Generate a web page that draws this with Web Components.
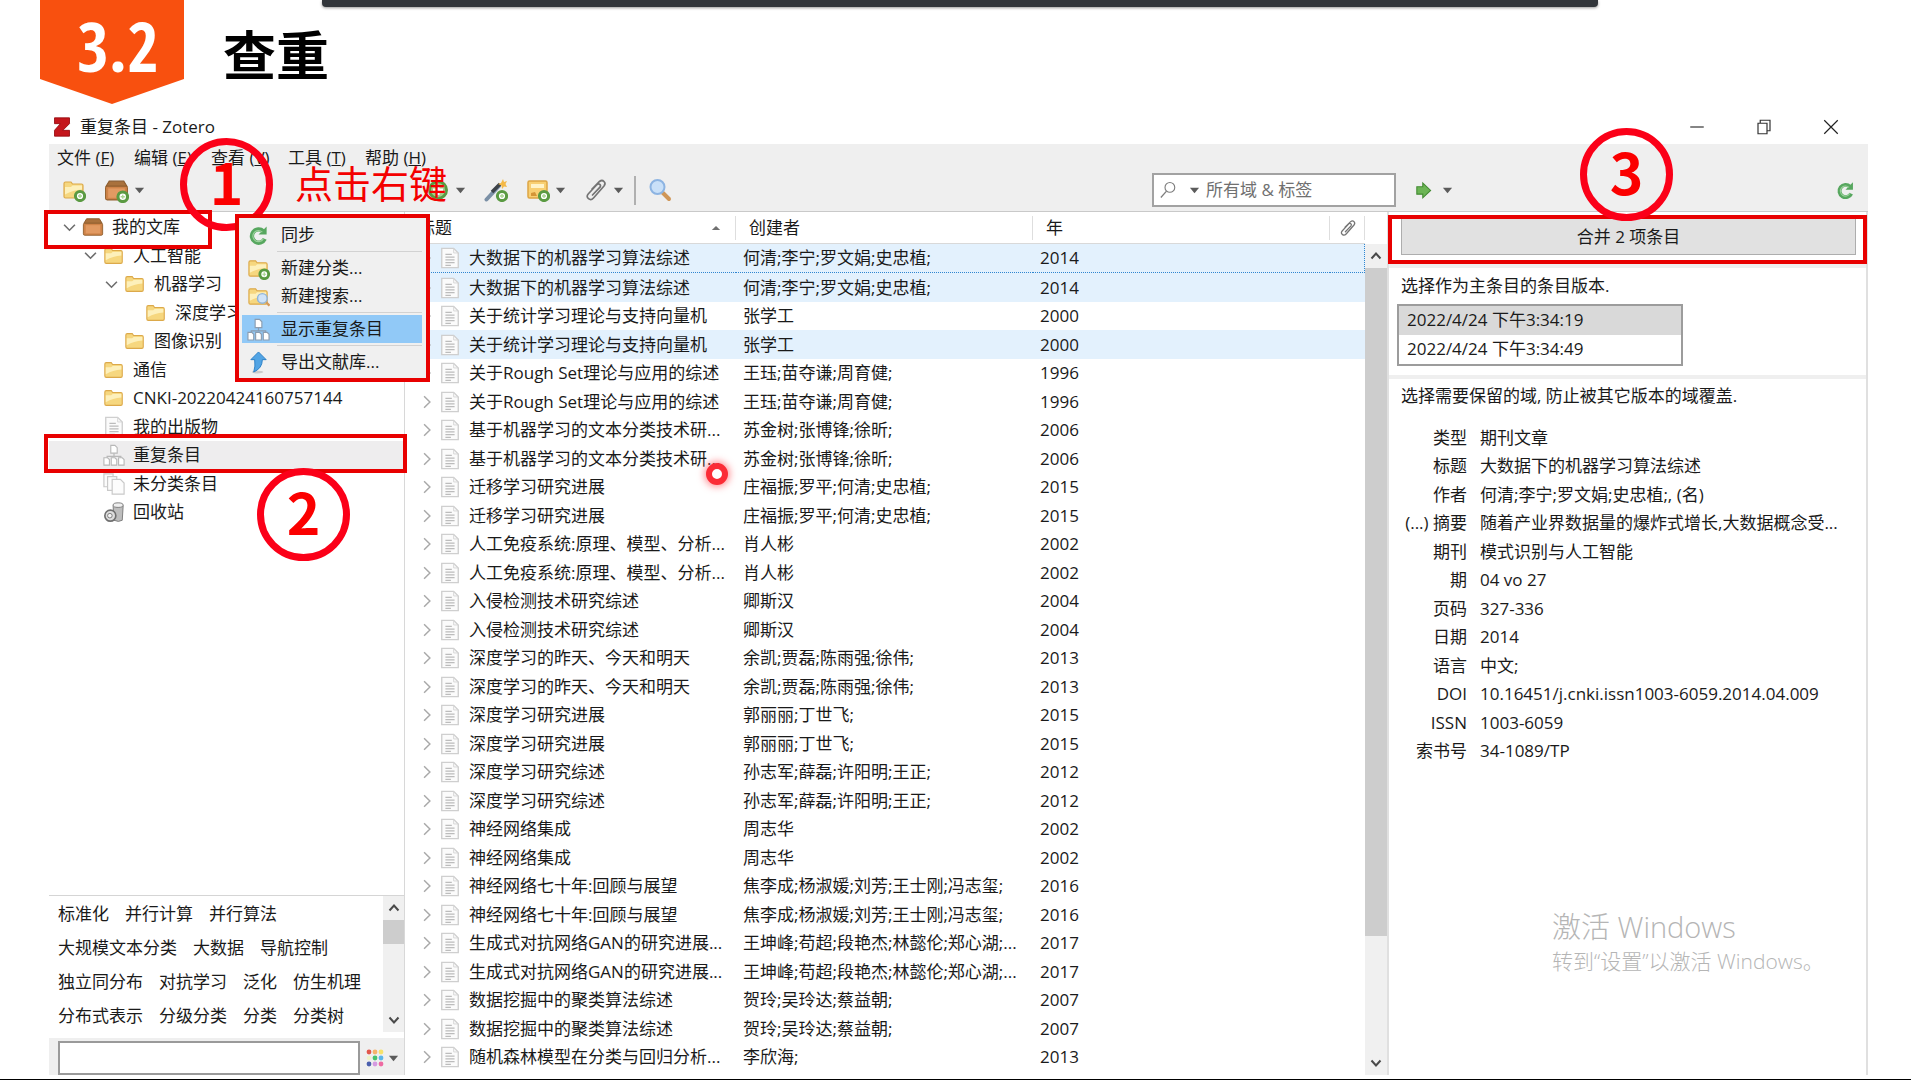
<!DOCTYPE html>
<html lang="zh-CN">
<head>
<meta charset="utf-8">
<title>查重 - Zotero</title>
<style>
html,body{margin:0;height:100%}
body{background:#fff;color:#1a1a1a;font:17px/28px "Open Sans","Noto Sans CJK SC",sans-serif;overflow:hidden}
</style>
</head>
<body>
<slide-page></slide-page>
<script>
const folder = '<path d="M2 5.500q0-1.500 1.500-1.500h5.500l1.500 2h9q1.500 0 1.500 1.500v11q0 1.500-1.500 1.500h-16q-1.500 0-1.500-1.500z" fill="#f6d77f" stroke="#dca94a" stroke-width="1.200"/><path d="M3 9h6l1.500-1.500h9.500v4q-9 .500-17 5z" fill="#fdf0bb"/>';
const plus = '<circle cx="18" cy="18" r="4.600" fill="#fff" stroke="#5a9a42" stroke-width="3"/><path d="M18 16v4M16 18h4" stroke="#a9d492" stroke-width="1.300"/>';
const box = '<path d="M5 3h14l3 5H2z" fill="#a9713c" stroke="#8a5a2c"/><rect x="1.500" y="8" width="21" height="13" rx="1.500" fill="#cf8348" stroke="#93602f"/><rect x="4" y="10" width="16" height="9" fill="#e29a62"/>';
const sheet = '<path d="M3 1.500h13l5 5v16H3z" fill="#fbfbfb" stroke="#cfcfcf" stroke-width="1.500"/><path d="M16 1.500v5h5" fill="none" stroke="#d4d4d4"/><path d="M7 8h7M7 11h10M7 14h10M7 17h10M7 20h6" stroke="#bcbcbc" stroke-width="1.400"/>';
const clip = '<path d="M8 11L15.500 3.500q2.500-2 4.500 0t0 4.500L9.500 20q-2.500 2.800-5 .700t-.300-4.700L13 6.500q1.500-1.300 2.800-.200t.200 2.900L8.500 17" fill="none" stroke="#747474" stroke-width="1.700" stroke-linecap="round"/>';
const sync = '<path d="M18.500 15.500a7 7 0 1 1-1.500-8" fill="none" stroke="#57a75f" stroke-width="4.500"/><path d="M20.500 2.500v8.500h-8.500z" fill="#57a75f"/><path d="M17 15.500a5.800 5.800 0 1 1-1-7" fill="none" stroke="#9bd29b" stroke-width="1.200"/>';
const dup = c => `<path d="M12 9v5M4.500 16v-2.500h15V16" stroke="${c}" fill="none" stroke-width="1.300"/><g fill="#fff" stroke="${c}" stroke-width="1.200"><path d="M8.500 1.500h4.500l2.500 2.500v6h-7zM1 15h4l2 2v6H1zM9 15h4l2 2v6H9zM17 15h4l2 2v6h-6z"/></g>`;
const ICONS = {
  folder, box, sheet, clip, sync,
  folderAdd: folder + plus,
  boxAdd: box + plus,
  folderFind: folder + '<circle cx="16" cy="14" r="5" fill="#cfe3f8" stroke="#8fb4da" stroke-width="1.500"/><path d="M20 18l3.500 3.500" stroke="#d49a5a" stroke-width="2.500"/>',
  add: '<circle cx="12" cy="12" r="8.500" fill="#a3cf8c" stroke="#5a9a42" stroke-width="3"/><path d="M12 7v10M7 12h10" stroke="#fff" stroke-width="3"/>',
  wand: '<path d="M2.500 21.500L15 8" stroke="#7b90a6" stroke-width="4" stroke-linecap="round"/><path d="M8 14l8-8" stroke="#3d4248" stroke-width="3.500"/><path d="M19 1l1 3 3-1-1.500 3L23 9l-3-.500L18 11l-.500-3.500L14 6l3-1z" fill="#f4b948"/>' + plus,
  note: '<rect x="2" y="3" width="19" height="17" rx="1.500" fill="#f8cf72" stroke="#dda544" stroke-width="1.500"/><rect x="5" y="6" width="13" height="4" fill="#fff3c8"/><path d="M5 15l4-1 2 4H5z" fill="#d49537"/>' + plus,
  find: '<path d="M15 15l6 6" stroke="#cf9657" stroke-width="4" stroke-linecap="round"/><circle cx="9.500" cy="9" r="7" fill="#c9e0f8" stroke="#8db4e2" stroke-width="2"/>',
  lens: '<circle cx="14.500" cy="8.500" r="6.500" fill="none" stroke="#7d7d7d" stroke-width="1.500"/><path d="M10 13.500L2.500 22" stroke="#7d7d7d" stroke-width="1.700"/>',
  go: '<path d="M2 8.500h6.500V4.500l8.500 8-8.500 8v-4H2z" fill="#6cb555" stroke="#448c34" stroke-width="1.200"/>',
  dup: dup('#b8b8b8'), dupBlue: dup('#8c9db0'),
  unfiled: '<g fill="#fcfcfc" stroke="#c9c9c9" stroke-width="1.300"><path d="M1 1h10v14H1z"/><path d="M5 4h10v15H5z"/><path d="M10 7h9l4 4v12H10z"/></g>',
  trash: '<path d="M11 5l1 16q5 2.500 9 0l1-16z" fill="#bdbdbd" stroke="#777"/><ellipse cx="16.500" cy="4.500" rx="5.500" ry="2.500" fill="#efefef" stroke="#777"/><circle cx="8" cy="16" r="6" fill="#ddd" stroke="#707070" stroke-width="1.800"/><circle cx="7.500" cy="16" r="2.500" fill="#f6f6f6" stroke="#777"/>',
  export: '<ellipse cx="11" cy="22" rx="6" ry="1.500" fill="#ccc"/><path d="M12 1l8 8h-4q0 9-9 13 2-6 1-13H4z" fill="#52a4e4" stroke="#2b7fc6"/>',
  zotero: '<path d="M3 1h18v7l-8 8h8v7H3v-7l7-8H3z" fill="#c4161c" stroke="#94080d"/>',
  min: '<path d="M3 12h18" stroke="#333" stroke-width="1.600"/>',
  max: '<path d="M4 7h12v14H4zM7 7V3h13v14h-4" fill="none" stroke="#333" stroke-width="1.600"/>',
  close: '<path d="M3 3l18 18M21 3L3 21" stroke="#222" stroke-width="1.600"/>',
  caret: '<path d="M2 6h20L12 18z" fill="#5b5b5b"/>',
  sort: '<path d="M2 17h20L12 7z" fill="#707070"/>',
  right: '<path d="M7 2l10 10L7 22" fill="none" stroke="#a9a9a9" stroke-width="2.500"/>',
  down: '<path d="M2 7l10 10L22 7" fill="none" stroke="#6e6e6e" stroke-width="3"/>',
  sUp: '<path d="M3 17l9-10 9 10" fill="none" stroke="#4a4a4a" stroke-width="4"/>',
  sDown: '<path d="M3 7l9 10 9-10" fill="none" stroke="#4a4a4a" stroke-width="4"/>',
  colors: '<g><circle cx="4" cy="4" r="3.200" fill="#e2574c"/><circle cx="12" cy="4" r="3.200" fill="#f6b36b"/><circle cx="20" cy="4" r="3.200" fill="#f7e26b"/><circle cx="4" cy="12" r="3" fill="#eef3c8"/><circle cx="12" cy="12" r="3.200" fill="#49c36c"/><circle cx="20" cy="12" r="3.200" fill="#5bb6e8"/><circle cx="4" cy="20" r="3.200" fill="#4a5fae"/><circle cx="12" cy="20" r="3.200" fill="#d59ae0"/><circle cx="20" cy="20" r="3.200" fill="#ee6aa2"/></g>'
};
const RESET = ':host,*{box-sizing:border-box}button{all:unset;box-sizing:border-box;cursor:default}';
function define(name, render) {
  customElements.define(name, class extends HTMLElement {
    constructor() { super(); this.attachShadow({mode: 'open'}); }
    connectedCallback() { this.shadowRoot.innerHTML = render(this); }
  });
}
const I = (name, size = 24) => `<z-icon name="${name}" size="${size}"></z-icon>`;

define('z-icon', el => { const s = el.getAttribute('size'); return `<style>:host{display:block;flex:none;width:${s}px;height:${s}px}svg{display:block}</style><svg width="${s}" height="${s}" viewBox="0 0 24 24" aria-hidden="true">${ICONS[el.getAttribute('name')]}</svg>`; });

define('tool-button', el => `<style>${RESET}:host{display:block;flex:none}button{display:flex;align-items:center;gap:5px}</style>
<button aria-label="${el.getAttribute('label')}">${I(el.getAttribute('icon'), el.getAttribute('size') || 24)}${el.hasAttribute('menu') ? I('caret', 11) : ''}</button>`);

define('scroll-bar', () => `<style>:host{display:flex;flex-direction:column;flex:none;background:#f0f0f0}
i{display:flex;height:24px;align-items:center;justify-content:center;flex:none}b{background:#cdcdcd;flex:var(--thumb)}u{flex:var(--rest)}</style>
<i>${I('sUp', 12)}</i><b></b><u></u><i>${I('sDown', 12)}</i>`);

define('title-bar', () => `<style>${RESET}:host{display:flex;height:44px;flex:none;align-items:center;padding:10px 28px 0 3px;gap:8px}
span{flex:1}button{width:18px;margin-left:41px}</style>${I('zotero', 20)}<span>重复条目 - Zotero</span>
<button aria-label="最小化">${I('min', 18)}</button><button aria-label="还原">${I('max', 18)}</button><button aria-label="关闭">${I('close', 18)}</button>`);

define('menu-bar', () => `<style>${RESET}:host{display:flex;flex:none;height:27px;padding-left:8px;background:#efefef}button{width:77px;white-space:nowrap;line-height:26px}</style>` +
  [['文件','F'],['编辑','E'],['查看','V'],['工具','T'],['帮助','H']].map(m => `<button>${m[0]} (<u>${m[1]}</u>)</button>`).join(''));

define('tool-bar', () => `<style>${RESET}:host{display:flex;flex:none;height:41px;background:#efefef;border-bottom:1px solid #c9c9c9;align-items:center;padding-bottom:2px}
div{display:flex;align-items:center}.c{width:377px;padding-left:13px;gap:18px;flex:none}.i{flex:1;gap:18px}.r{width:472px;flex:none;padding:0 12px 0 19px;justify-content:space-between}
hr{border:0;width:2px;height:29px;background:#b0b0b0;margin:0 -6px 0 -8px}label{display:flex;align-items:center;gap:12px;width:244px;height:34px;border:2px solid #a2a2a2;background:#fff;padding-left:5px;margin-left:auto}
label z-icon+z-icon{margin-right:-6px}input{border:0;outline:0;flex:1;min-width:0;padding:0;background:none;font:inherit}input::placeholder{color:#707070;opacity:1}</style>
<div class="c"><tool-button icon="folderAdd" label="新建分类"></tool-button><tool-button icon="boxAdd" label="新建文库" size="25" menu></tool-button></div>
<div class="i"><tool-button icon="add" label="新建条目" menu></tool-button><tool-button icon="wand" label="通过标识符添加"></tool-button><tool-button icon="note" label="新建笔记" menu></tool-button><tool-button icon="clip" label="添加附件" menu></tool-button><hr><tool-button icon="find" label="高级搜索"></tool-button>
<label>${I('lens', 18)}${I('caret', 11)}<input placeholder="所有域 &amp; 标签" aria-label="搜索"></label></div>
<div class="r"><tool-button icon="go" label="定位" menu size="22"></tool-button><tool-button icon="sync" label="同步" size="21"></tool-button></div>`);

define('tree-row', el => { const l = +el.getAttribute('level'); return `<style>${RESET}:host{display:flex;height:28px;align-items:center;padding-left:${14 + 21 * l}px;white-space:nowrap}:host(:nth-child(even)){height:29px}:host([selected]){background:#eeedee}
i{width:19px;flex:none}span{margin-left:8px}</style><i>${el.hasAttribute('open') ? I('down', 13) : ''}</i>${I(el.getAttribute('icon'), 22)}<span><slot></slot></span>`; });

define('collection-pane', () => `<style>${RESET}:host{display:flex;flex-direction:column;width:356px;flex:none;border-right:1px solid #d8d8d8;min-height:0}
nav{flex:1;padding-top:1px;min-height:0;overflow:hidden}.t{display:flex;height:137px;border-top:1px solid #d5d5d5;flex:none}.g{flex:1;display:flex;flex-wrap:wrap;column-gap:16px;align-content:flex-start;padding-left:9px;overflow:hidden}
.g button{height:34px;line-height:36px}scroll-bar{width:21px;--thumb:24;--rest:64}.f{display:flex;flex:none;margin-top:6px;height:37px;background:#efefef;padding:3px 5px 0 9px;align-items:center;gap:6px}
input{flex:1;min-width:0;height:34px;border:2px solid #9a9a9a;font:inherit}.f button{display:flex;align-items:center;gap:4px}</style>
<nav><tree-row level="0" icon="box" open>我的文库</tree-row><tree-row level="1" icon="folder" open>人工智能</tree-row><tree-row level="2" icon="folder" open>机器学习</tree-row><tree-row level="3" icon="folder">深度学习</tree-row><tree-row level="2" icon="folder">图像识别</tree-row><tree-row level="1" icon="folder">通信</tree-row><tree-row level="1" icon="folder">CNKI-20220424160757144</tree-row><tree-row level="1" icon="sheet">我的出版物</tree-row><tree-row level="1" icon="dup" selected>重复条目</tree-row><tree-row level="1" icon="unfiled">未分类条目</tree-row><tree-row level="1" icon="trash">回收站</tree-row></nav>
<div class="t"><div class="g">${'标准化 并行计算 并行算法 大规模文本分类 大数据 导航控制 独立同分布 对抗学习 泛化 仿生机理 分布式表示 分级分类 分类 分类树'.split(' ').map(t => `<button>${t}</button>`).join('')}</div><scroll-bar></scroll-bar></div>
<div class="f"><input aria-label="筛选标签"><button aria-label="标签颜色">${I('colors', 18)}${I('caret', 11)}</button></div>`);

const ITEMS = [
  ['大数据下的机器学习算法综述','何清;李宁;罗文娟;史忠植;',2014],
  ['关于统计学习理论与支持向量机','张学工',2000],
  ['关于Rough Set理论与应用的综述','王珏;苗夺谦;周育健;',1996],
  ['基于机器学习的文本分类技术研...','苏金树;张博锋;徐昕;',2006],
  ['迁移学习研究进展','庄福振;罗平;何清;史忠植;',2015],
  ['人工免疫系统:原理、模型、分析...','肖人彬',2002],
  ['入侵检测技术研究综述','卿斯汉',2004],
  ['深度学习的昨天、今天和明天','余凯;贾磊;陈雨强;徐伟;',2013],
  ['深度学习研究进展','郭丽丽;丁世飞;',2015],
  ['深度学习研究综述','孙志军;薛磊;许阳明;王正;',2012],
  ['神经网络集成','周志华',2002],
  ['神经网络七十年:回顾与展望','焦李成;杨淑媛;刘芳;王士刚;冯志玺;',2016],
  ['生成式对抗网络GAN的研究进展...','王坤峰;苟超;段艳杰;林懿伦;郑心湖;...',2017],
  ['数据挖掘中的聚类算法综述','贺玲;吴玲达;蔡益朝;',2007]
];
const ROWS = [...ITEMS.flatMap(r => [r, r]), ['随机森林模型在分类与回归分析...','李欣海;',2013], ['','','']];
define('item-list', () => `<style>${RESET}:host{display:flex;flex:1;min-width:0;min-height:0}
.w{flex:1;min-width:0;overflow:hidden}table{width:100%;border-collapse:separate;border-spacing:0;table-layout:fixed;white-space:nowrap}th,td{padding:0;font-weight:400;text-align:left;overflow:hidden}
.title{width:331px}.who{width:297px}.att{width:35px}
th{height:32px;border-bottom:1px solid #d9d9d9}th div{display:flex;align-items:center;justify-content:space-between;height:24px;border-right:1px solid #dedede;padding:0 14px 0 13px}th:last-child div{padding:0 0 0 9px}
td{height:28px;line-height:28px;padding-left:7px}tr:nth-child(even) td{height:29px}tbody tr:first-child td{height:29px;border-bottom:1px dotted #2f86d0}tbody tr:first-child td:last-child{border-right:1px dotted #2f86d0}
.s td{background:#e3f1fd}td div{display:flex;align-items:center;height:28px}td:first-child{padding-left:15px}td div z-icon+z-icon{margin:0 8px 0 5px}
.b{display:flex;flex-direction:column;width:22px;padding-top:32px}scroll-bar{flex:1;--thumb:668;--rest:115}</style>
<div class="w"><table><colgroup><col class="title"><col class="who"><col><col class="att"></colgroup><thead><tr><th><div>标题${I('sort', 10)}</div></th><th><div>创建者</div></th><th><div>年</div></th><th aria-label="附件"><div>${I('clip', 18)}</div></th></tr></thead><tbody>
${ROWS.map((r, i) => `<tr class="${[0,1,3].includes(i) ? 's' : ''}"><td><div>${I('right', 14)}${I('sheet', 22)}${r[0]}</div></td><td>${r[1]}</td><td>${r[2]}</td><td></td></tr>`).join('')}</tbody></table></div><div class="b"><scroll-bar></scroll-bar></div>`);

define('merge-pane', () => `<style>${RESET}:host{display:block;flex:none;width:481px;border:solid #e0e0e0;border-width:0 2px;min-height:0;overflow:hidden}
.m{padding:6px 10px 9px 12px;border-bottom:4px solid #efefef}.m button{display:block;width:100%;height:37px;line-height:35px;text-align:center;background:#e1e1e1;border:1px solid #adadad}
.v{padding:4px 8px 9px;border-bottom:4px solid #efefef}.v label{display:block;padding-left:4px;height:32px;line-height:28px}select{display:block;width:286px;height:62px;border:2px solid #9c9c9c;border-radius:0;padding:0;font:inherit;color:inherit;overflow:hidden;outline:0;background:#fff}
option{height:29px;min-height:29px;line-height:29px;padding:0 8px}option:checked{background:#d9d9d9 linear-gradient(#d9d9d9,#d9d9d9);color:#1a1a1a}
p{margin:0;padding:3px 12px 14px}dl{margin:0;display:grid;grid-template:repeat(6,28px 29px)/78px 1fr;column-gap:13px;white-space:nowrap}dt{text-align:right}dd{margin:0}</style>
<div class="m"><button>合并 2 项条目</button></div>
<div class="v"><label for="ver">选择作为主条目的条目版本.</label><select id="ver" size="2"><option selected>2022/4/24 下午3:34:19</option><option>2022/4/24 下午3:34:49</option></select></div>
<p>选择需要保留的域, 防止被其它版本的域覆盖.</p>
<dl>${[['类型','期刊文章'],['标题','大数据下的机器学习算法综述'],['作者','何清;李宁;罗文娟;史忠植;, (名)'],['(...) 摘要','随着产业界数据量的爆炸式增长,大数据概念受...'],['期刊','模式识别与人工智能'],['期','04 vo 27'],['页码','327-336'],['日期','2014'],['语言','中文;'],['DOI','10.16451/j.cnki.issn1003-6059.2014.04.009'],['ISSN','1003-6059'],['索书号','34-1089/TP']].map(r => `<dt>${r[0]}</dt><dd>${r[1]}</dd>`).join('')}</dl>`);

define('menu-item', el => `<style>${RESET}:host{display:block}button{display:flex;align-items:center;gap:11px;width:100%;height:28px;padding-left:5px}:host([active]) button{background:#91c9f7}</style><button role="menuitem">${I(el.getAttribute('icon'), 23)}<slot></slot></button>`);
define('context-menu', () => `<style>:host{display:block;background:#f0f0f0;border:4px solid #e80000;padding:3px 4px 2px 3px;box-sizing:border-box}hr{border:0;height:1px;background:#d2d2d2;margin:2px 0 2px 35px}</style>
<menu-item icon="sync">同步</menu-item><hr><menu-item icon="folderAdd">新建分类...</menu-item><menu-item icon="folderFind">新建搜索...</menu-item><hr><menu-item icon="dupBlue" active>显示重复条目</menu-item><hr><menu-item icon="export">导出文献库...</menu-item>`);

define('step-mark', () => `<style>:host{position:absolute;box-sizing:border-box;width:93px;height:93px;border:7px solid #fb0018;border-radius:50%;color:#fb0000;font:700 57px/70px "Noto Sans CJK SC",sans-serif;text-align:center}</style><slot></slot>`);

define('slide-heading', () => `<style>${RESET}:host{display:flex;flex:none;height:100px;padding-left:40px;gap:39px;align-items:flex-start}
.n{width:144px;height:104px;flex:none;background:#f8500f;clip-path:polygon(0 0,100% 0,100% 76%,50% 100%,0 76%);color:#fff;font:700 68px/92px "Liberation Sans Narrow","Open Sans Condensed","Roboto Condensed","Liberation Sans",sans-serif;padding-left:12px;text-align:center}
h1{margin:0;color:#000;font:700 53px/106px "Noto Sans CJK SC",sans-serif}</style><div class="n">3.2</div><h1>查重</h1>`);

define('slide-page', () => `<style>:host{display:flex;flex-direction:column;position:relative;height:100vh;box-sizing:border-box;padding-bottom:4px;border-bottom:1px solid #000;overflow:hidden}
main{flex:1;min-height:0;display:flex;flex-direction:column;margin:0 43px 0 49px}.p{flex:1;display:flex;min-height:0}
.bar,.a,context-menu,.laser,.wm{position:absolute}.bar{top:0;left:322px;right:313px;height:7px;background:#32363b;border-radius:0 0 4px 4px;box-shadow:0 1px 3px #0006}
.a{box-sizing:border-box;border:4px solid #e80000}.say{position:absolute;left:295px;top:155px;color:#f40000;font:38px/54px "Noto Sans CJK SC",sans-serif}
.laser{left:706px;top:463px;width:22px;height:22px;box-sizing:border-box;border:6px solid #fb2c36;border-radius:50%;background:#fff;box-shadow:0 0 7px 2px #ff5a60a0}
.wm{left:1552px;top:908px;color:#b5b5b5;font-weight:300;font-size:29px;line-height:38px}.wm small{display:block;font-size:21px;line-height:30px}</style>
<slide-heading></slide-heading>
<main><title-bar></title-bar><menu-bar></menu-bar><tool-bar></tool-bar><div class="p"><collection-pane></collection-pane><item-list></item-list><merge-pane></merge-pane></div></main>
<div class="bar"></div>
<div class="a" style="left:44px;top:210px;width:168px;height:39px"></div>
<div class="a" style="left:44px;top:434px;width:363px;height:39px"></div>
<div class="a" style="right:44px;top:215px;width:479px;height:49px"></div>
<step-mark style="left:180px;top:138px">1</step-mark>
<context-menu style="left:235px;top:214px;width:195px" role="menu"></context-menu>
<step-mark style="left:257px;top:468px">2</step-mark>
<step-mark style="right:238px;top:128px">3</step-mark>
<div class="say">点击右键</div><div class="laser"></div>
<div class="wm">激活 Windows<small>转到“设置”以激活 Windows。</small></div>`);
</script>
</body>
</html>
